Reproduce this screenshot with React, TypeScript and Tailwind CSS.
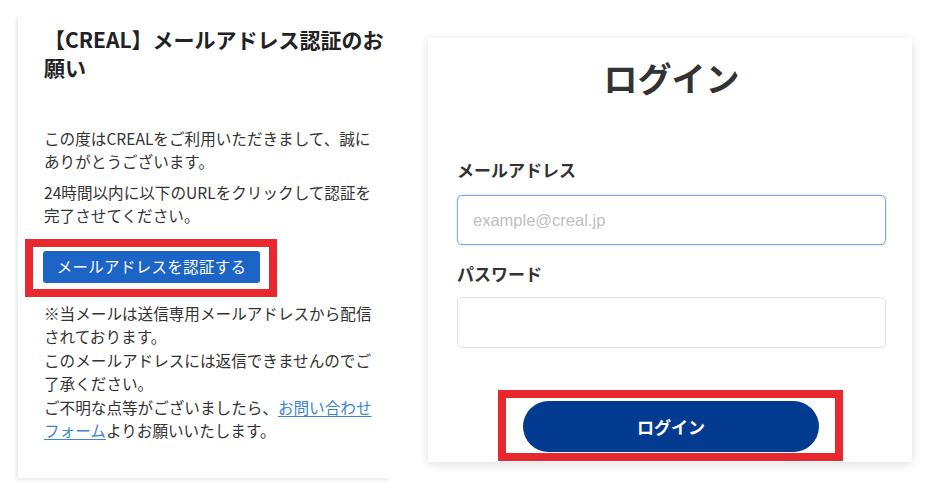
const jp = "font-['Noto_Sans_CJK_JP','Noto_Sans',sans-serif]";

function MailCard() {
  return (
    <div className="ml-[18px] mt-[15px] h-[463px] w-[372px] shrink-0 bg-white pl-[26px] pt-[10px] shadow-[-2px_2px_4px_rgba(0,0,0,0.09)]">
      <h1 className="text-[21px] font-bold leading-[28px] text-[#222]">
        【CREAL】メールアドレス認証のお
        <br />
        願い
      </h1>

      <div className="mt-[46px] text-[15.6px] leading-[23px] text-[#333]">
        <p>
          この度はCREALをご利用いただきまして、誠に
          <br />
          ありがとうございます。
        </p>
        <p className="mt-[8px]">
          24時間以内に以下のURLをクリックして認証を
          <br />
          完了させてください。
        </p>
      </div>

      {/* annotation box */}
      <div className="-ml-[19px] mt-[12px] h-[58px] w-[252px] border-8 border-[#e8282e] pl-[10px] pt-[4px]">
        <button className="h-[32px] w-[217px] rounded-[3px] bg-[#1c64c6] text-[15.5px] tracking-[0.3px] text-white">
          メールアドレスを認証する
        </button>
      </div>

      <p className="mt-[5px] text-[15.6px] leading-[23.4px] text-[#333]">
        ※当メールは送信専用メールアドレスから配信
        <br />
        されております。
        <br />
        このメールアドレスには返信できませんのでご
        <br />
        了承ください。
        <br />
        ご不明な点等がございましたら、
        <a href="#" className="text-[#3a86d4] underline underline-offset-2">
          お問い合わせ
          <br />
          フォーム
        </a>
        よりお願いいたします。
      </p>
    </div>
  );
}

function LoginCard() {
  return (
    <div className="ml-[38px] mt-[38px] flex h-[424px] w-[484px] shrink-0 flex-col bg-white pl-[29px] pr-[26px] pt-[18px] shadow-[0_2px_10px_rgba(0,0,0,0.13)]">
      <h2 className="text-center text-[34px] font-bold leading-[44px] text-[#333]">ログイン</h2>

      <label className="mt-[58px] text-[17px] font-bold leading-[24px] text-[#333]">メールアドレス</label>
      <input
        type="email"
        placeholder="example@creal.jp"
        className="mt-[13px] h-[50px] w-full rounded-[5px] border-[1.5px] border-[#82a8dc] px-[15px] font-['Liberation_Sans',Arial,sans-serif] text-[16.5px] text-[#333] shadow-[0_0_2px_rgba(90,140,210,0.5)] outline-none placeholder:text-[#c0c0c0]"
      />

      <label className="mt-[17px] text-[17px] font-bold leading-[24px] text-[#333]">パスワード</label>
      <input
        type="password"
        className="mt-[11px] h-[51px] w-full rounded-[5px] border border-[#e3e3e3] px-[15px] outline-none"
      />

      {/* annotation box */}
      <div className="mt-[42px] h-[71px] w-[345px] self-start border-8 border-[#e8282e] pl-[17px] pt-[3px] ml-[41px]">
        <button className="h-[51px] w-[296px] rounded-full bg-[#023b90] text-[17px] font-bold text-white">
          ログイン
        </button>
      </div>
    </div>
  );
}

export default function App() {
  return (
    <div className={`flex h-[500px] w-[940px] bg-white ${jp}`}>
      <MailCard />
      <LoginCard />
    </div>
  );
}
